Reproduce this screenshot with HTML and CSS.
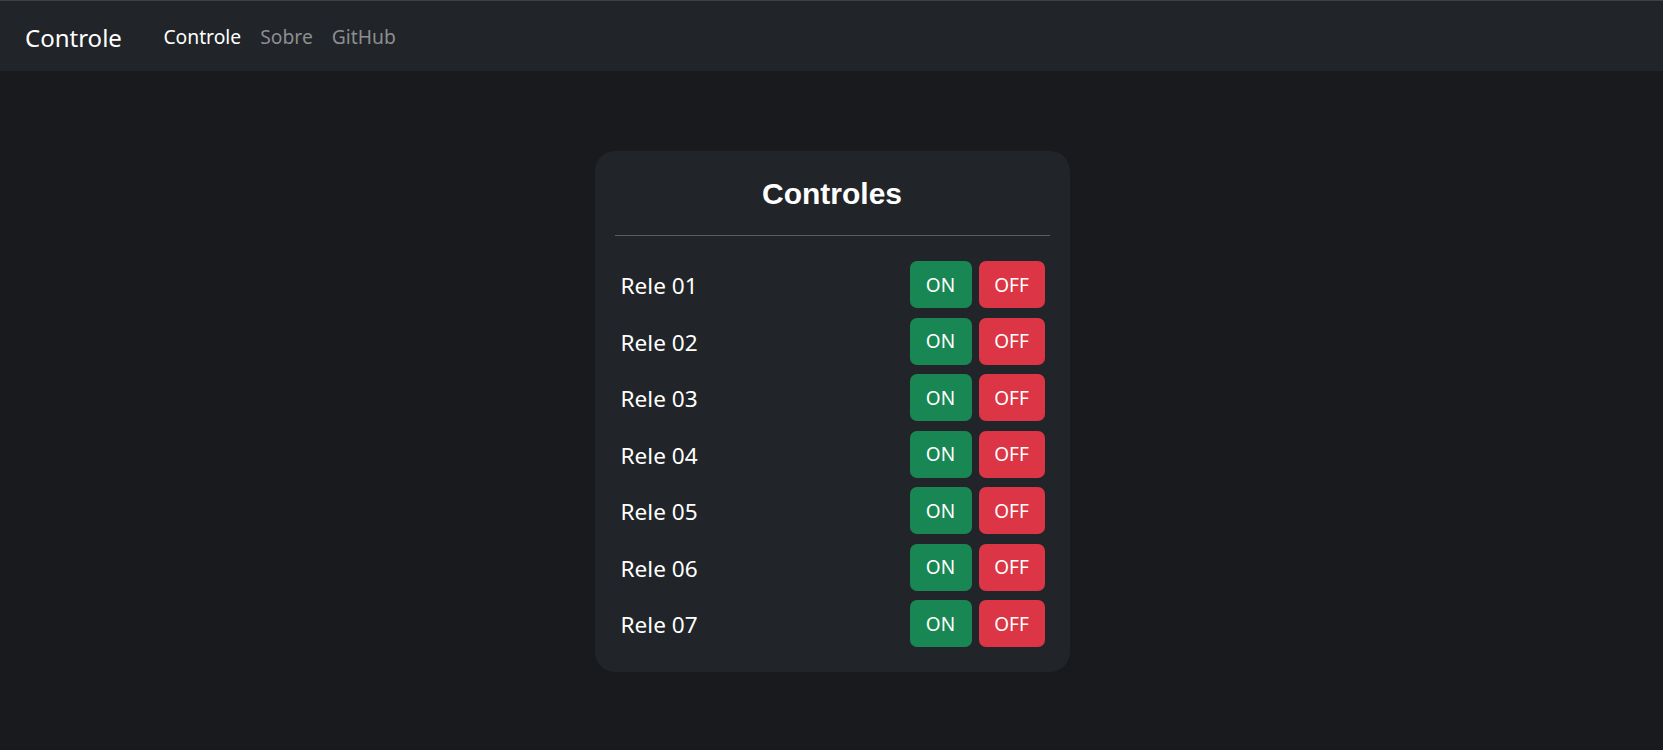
FILE: index.html
```html
<!DOCTYPE html>
<html lang="pt-BR">
<head>
<meta charset="utf-8">
<title>Controle</title>
<link rel="stylesheet" href="styles.css">
</head>
<body>
<nav class="navbar">
  <a class="brand" href="#">Controle</a>
  <ul class="nav">
    <li><a class="nav-link active" href="#">Controle</a></li>
    <li><a class="nav-link" href="#">Sobre</a></li>
    <li><a class="nav-link" href="#">GitHub</a></li>
  </ul>
</nav>
<main class="main">
  <section class="card">
    <h1 class="card-title">Controles</h1>
    <hr class="divider">
    <div class="rows">
      <div class="row"><span class="label">Rele 01</span><div class="btns"><button class="btn on">ON</button><button class="btn off">OFF</button></div></div>
      <div class="row"><span class="label">Rele 02</span><div class="btns"><button class="btn on">ON</button><button class="btn off">OFF</button></div></div>
      <div class="row"><span class="label">Rele 03</span><div class="btns"><button class="btn on">ON</button><button class="btn off">OFF</button></div></div>
      <div class="row"><span class="label">Rele 04</span><div class="btns"><button class="btn on">ON</button><button class="btn off">OFF</button></div></div>
      <div class="row"><span class="label">Rele 05</span><div class="btns"><button class="btn on">ON</button><button class="btn off">OFF</button></div></div>
      <div class="row"><span class="label">Rele 06</span><div class="btns"><button class="btn on">ON</button><button class="btn off">OFF</button></div></div>
      <div class="row"><span class="label">Rele 07</span><div class="btns"><button class="btn on">ON</button><button class="btn off">OFF</button></div></div>
    </div>
  </section>
</main>
</body>
</html>
```
FILE: styles.css
```css
* { box-sizing: border-box; }
html, body { margin: 0; padding: 0; }
body {
  background: #181a1d;
  color: #dee2e6;
  font-family: "Noto Sans", "Open Sans", sans-serif;
  min-height: 750px;
}
.navbar {
  height: 71px;
  background: #212428;
  border-top: 1px solid #3e4145;
  display: flex;
  align-items: center;
  padding-left: 25px;
}
.brand {
  color: #ffffff;
  text-decoration: none;
  font-size: 24px;
  margin-right: 32px;
  margin-top: 2px;
}
.nav {
  list-style: none;
  margin: 0;
  padding: 0;
  display: flex;
  gap: 0;
}
.nav-link {
  display: block;
  padding: 8px 9.5px;
  color: #8c8e91;
  text-decoration: none;
  font-size: 19.3px;
}
.nav-link.active { color: #ffffff; }

.main {
  display: flex;
  justify-content: center;
  padding-top: 80px;
}
.card {
  width: 475px;
  margin-left: 1px;
  background: #212428;
  border-radius: 20px;
  padding: 25px 20px 25px;
}
.card-title {
  margin: 0;
  text-align: center;
  font-family: "Liberation Sans", Arial, sans-serif;
  font-weight: bold;
  font-size: 30px;
  line-height: 36px;
  color: #ffffff;
}
.divider {
  border: 0;
  border-top: 1px solid #5b5e61;
  margin: 23px 0 25px;
}
.rows {
  display: flex;
  flex-direction: column;
  gap: 9.5px;
  padding: 0 5px 0 6px;
}
.row {
  display: flex;
  align-items: center;
  justify-content: space-between;
}
.label {
  color: #ffffff;
  font-size: 22.6px;
  padding-top: 2px;
}
.btns {
  display: flex;
  gap: 7px;
}
.btn {
  font-family: "Noto Sans", "Open Sans", sans-serif;
  font-size: 19px;
  color: #ffffff;
  border: 0;
  border-radius: 7px;
  height: 47px;
  padding: 0;
}
.btn.on { background: #198754; width: 62px; }
.btn.off { background: #dc3545; width: 66px; }
```
